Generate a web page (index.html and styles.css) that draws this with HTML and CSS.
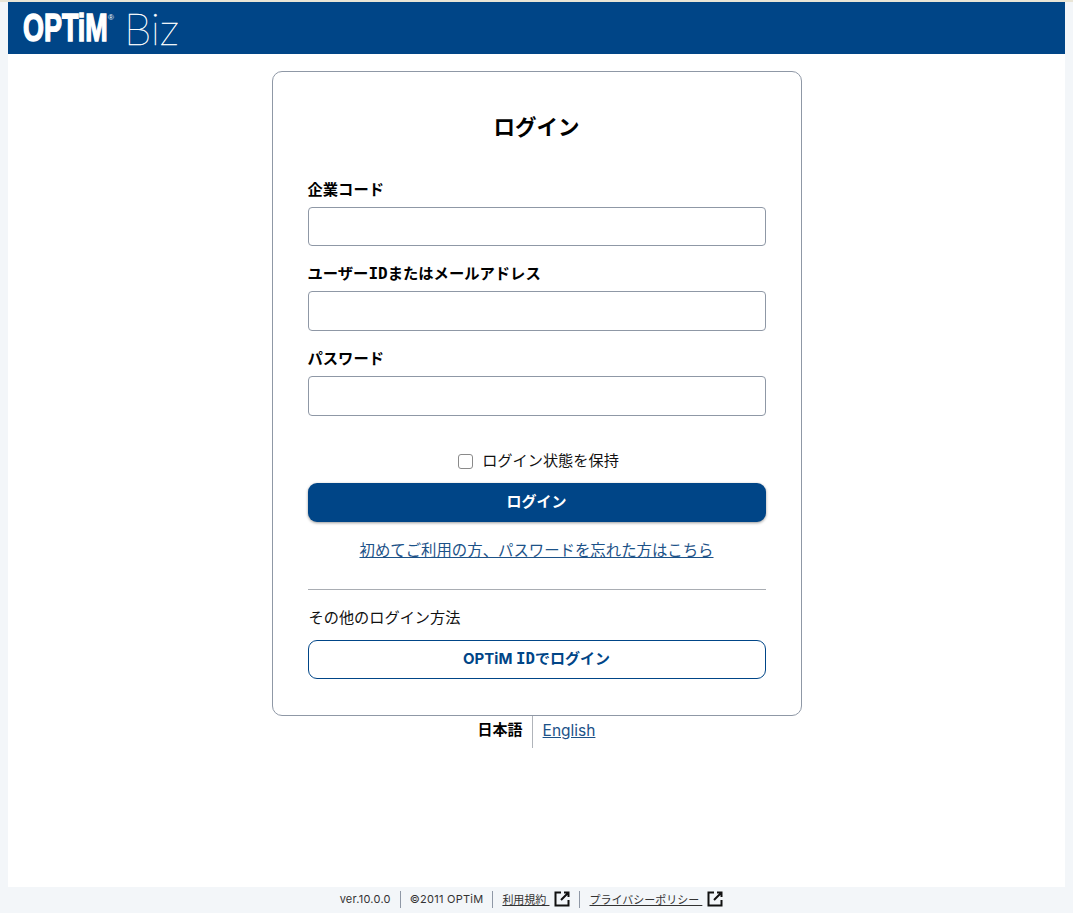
FILE: index.html
```html
<!DOCTYPE html>
<html lang="ja">
<head>
<meta charset="utf-8">
<title>ログイン</title>
<link rel="stylesheet" href="styles.css">
</head>
<body>
<div class="page">
  <div class="topline"></div>
  <div class="shell">
    <header class="header">
      <div class="logo"><span class="logo-optim">OPTiM</span><span class="logo-reg">®</span><span class="logo-biz">Biz</span></div>
    </header>
    <main class="main">
      <form class="card">
        <h1 class="title">ログイン</h1>
        <div class="field"><label class="label">企業コード</label><input class="input" type="text"></div>
        <div class="field"><label class="label">ユーザー<span class="slab">ID</span>またはメールアドレス</label><input class="input" type="text"></div>
        <div class="field"><label class="label">パスワード</label><input class="input" type="password"></div>
        <label class="keep"><span class="check"></span>ログイン状態を保持</label>
        <button class="btn-primary" type="button">ログイン</button>
        <a class="forgot" href="#">初めてご利用の方、パスワードを忘れた方はこちら</a>
        <hr class="divider">
        <p class="other">その他のログイン方法</p>
        <button class="btn-outline" type="button">OPTiM <span class="slab">ID</span>でログイン</button>
      </form>
      <div class="lang"><span class="lang-current">日本語</span><a class="lang-link" href="#">English</a></div>
    </main>
  </div>
  <footer class="footer">
    <span class="foot-item foot-text">ver.10.0.0</span>
    <span class="foot-item foot-text">©2011 OPTiM</span>
    <span class="foot-item"><a href="#">利用規約&nbsp;</a><svg class="ext" viewBox="0 0 16 16"><path d="M7 1.500H1.500v13h13V9M10 1.500h4.500V6M14.500 1.500L7 9" fill="none" stroke="#111" stroke-width="2"/></svg></span>
    <span class="foot-item"><a href="#">プライバシーポリシー&nbsp;</a><svg class="ext" viewBox="0 0 16 16"><path d="M7 1.500H1.500v13h13V9M10 1.500h4.500V6M14.500 1.500L7 9" fill="none" stroke="#111" stroke-width="2"/></svg></span>
  </footer>
</div>
</body>
</html>
```
FILE: styles.css
```css
* { box-sizing: border-box; }
html, body { margin: 0; padding: 0; height: 100%; }
body {
  font-family: "Inter", "Noto Sans CJK JP", sans-serif;
  color: #000;
  background: #f3f6f9;
}
.page { display: flex; flex-direction: column; height: 913px; overflow: hidden; }
.topline { height: 2px; background: #e9e5d6; }
.shell { flex: 1; margin: 0 8px; background: #fff; display: flex; flex-direction: column; }
.header { height: 52px; background: #004587; display: flex; align-items: center; padding-left: 15px; flex: none; }
.logo { display: flex; align-items: flex-start; color: #fff; height: 52px; }
.logo-optim {
  font-family: "Liberation Sans", sans-serif;
  font-weight: 700;
  font-size: 39px;
  line-height: 52px;
  display: inline-block;
  transform: scaleX(.69);
  transform-origin: left center;
  width: 85px;
  -webkit-text-stroke: 1.5px #fff;
}
.logo-reg { font-size: 8px; line-height: 1; margin-top: 12px; width: 16px; font-family: "Liberation Sans", sans-serif; }
.logo-biz { font-family: "Lato", sans-serif; font-weight: 100; font-size: 44px; line-height: 52px; -webkit-text-stroke: .4px #fff; }
.slab { font-family: "DejaVu Sans Mono", monospace; font-size: 1.050em; }
.main { flex: 1; display: flex; flex-direction: column; align-items: center; padding-top: 17px; }
.card {
  width: 530px;
  height: 645px;
  border: 1px solid #8f98a6;
  border-radius: 10px;
  padding: 0 35px;
  display: flex;
  flex-direction: column;
}
.title { margin: 37px 0 0; font-size: 21.500px; line-height: 36px; font-weight: 700; text-align: center; }
.field { display: flex; flex-direction: column; }
.field:first-of-type { margin-top: 33px; }
.field + .field { margin-top: 16px; }
.label { font-size: 15.300px; line-height: 22px; height: 23px; font-weight: 700; padding-top: 1px; margin-bottom: 6px; }
.input { height: 39px; border: 1px solid #8f98a6; border-radius: 4px; background: #fff; padding: 0 10px; }
.field + .field .input { height: 40px; }
.keep { display: flex; justify-content: center; align-items: center; font-size: 15.200px; line-height: 22px; margin-top: 34px; padding-left: 4px; color: #111; }
.check { width: 15px; height: 15px; border: 1.500px solid #8a8a8a; border-radius: 3px; margin-right: 9px; background: #fff; }
.btn-primary {
  margin-top: 11px;
  height: 39px;
  padding: 0 0 5px;
  border: 0;
  border-radius: 9px;
  background: #004587;
  color: #fff;
  font: 700 15px "Inter", "Noto Sans CJK JP", sans-serif;
  box-shadow: 0 1px 3px rgba(0,0,0,.4);
}
.forgot { margin-top: 18px; text-align: center; font-size: 15.400px; line-height: 22px; color: #1c5288; text-decoration: underline; }
.divider { width: 100%; height: 1px; border: 0; background: #a9adb3; margin: 27px 0 0; }
.other { margin: 17px 0 0; padding-left: 1px; font-size: 15.200px; line-height: 22px; color: #111; }
.btn-outline {
  margin-top: 11px;
  height: 39px;
  padding: 0 0 5px;
  border: 1px solid #004587;
  border-radius: 9px;
  background: #fff;
  color: #004587;
  font: 700 15px "Inter", "Noto Sans CJK JP", sans-serif;
}
.lang { display: flex; align-items: stretch; height: 32px; }
.lang-current { font-size: 15px; font-weight: 700; line-height: 28px; padding-right: 9px; border-right: 1px solid #b0b4ba; }
.lang-link { font-size: 15.500px; line-height: 29px; padding-left: 10px; color: #1c5288; text-decoration: underline; }
.footer {
  height: 26px;
  flex: none;
  display: flex;
  justify-content: center;
  align-items: center;
  font-size: 11px;
  color: #333;
  padding: 0 10px 2px 0;
}
.foot-item { display: flex; align-items: center; height: 17px; padding: 0 9px; border-left: 1px solid #8f98a6; white-space: nowrap; }
.foot-item:first-child { border-left: 0; }
.foot-text { letter-spacing: .25px; }
.foot-item a { color: #333; text-decoration: underline; }
.ext { width: 16px; height: 16px; margin-left: 5px; }
```
